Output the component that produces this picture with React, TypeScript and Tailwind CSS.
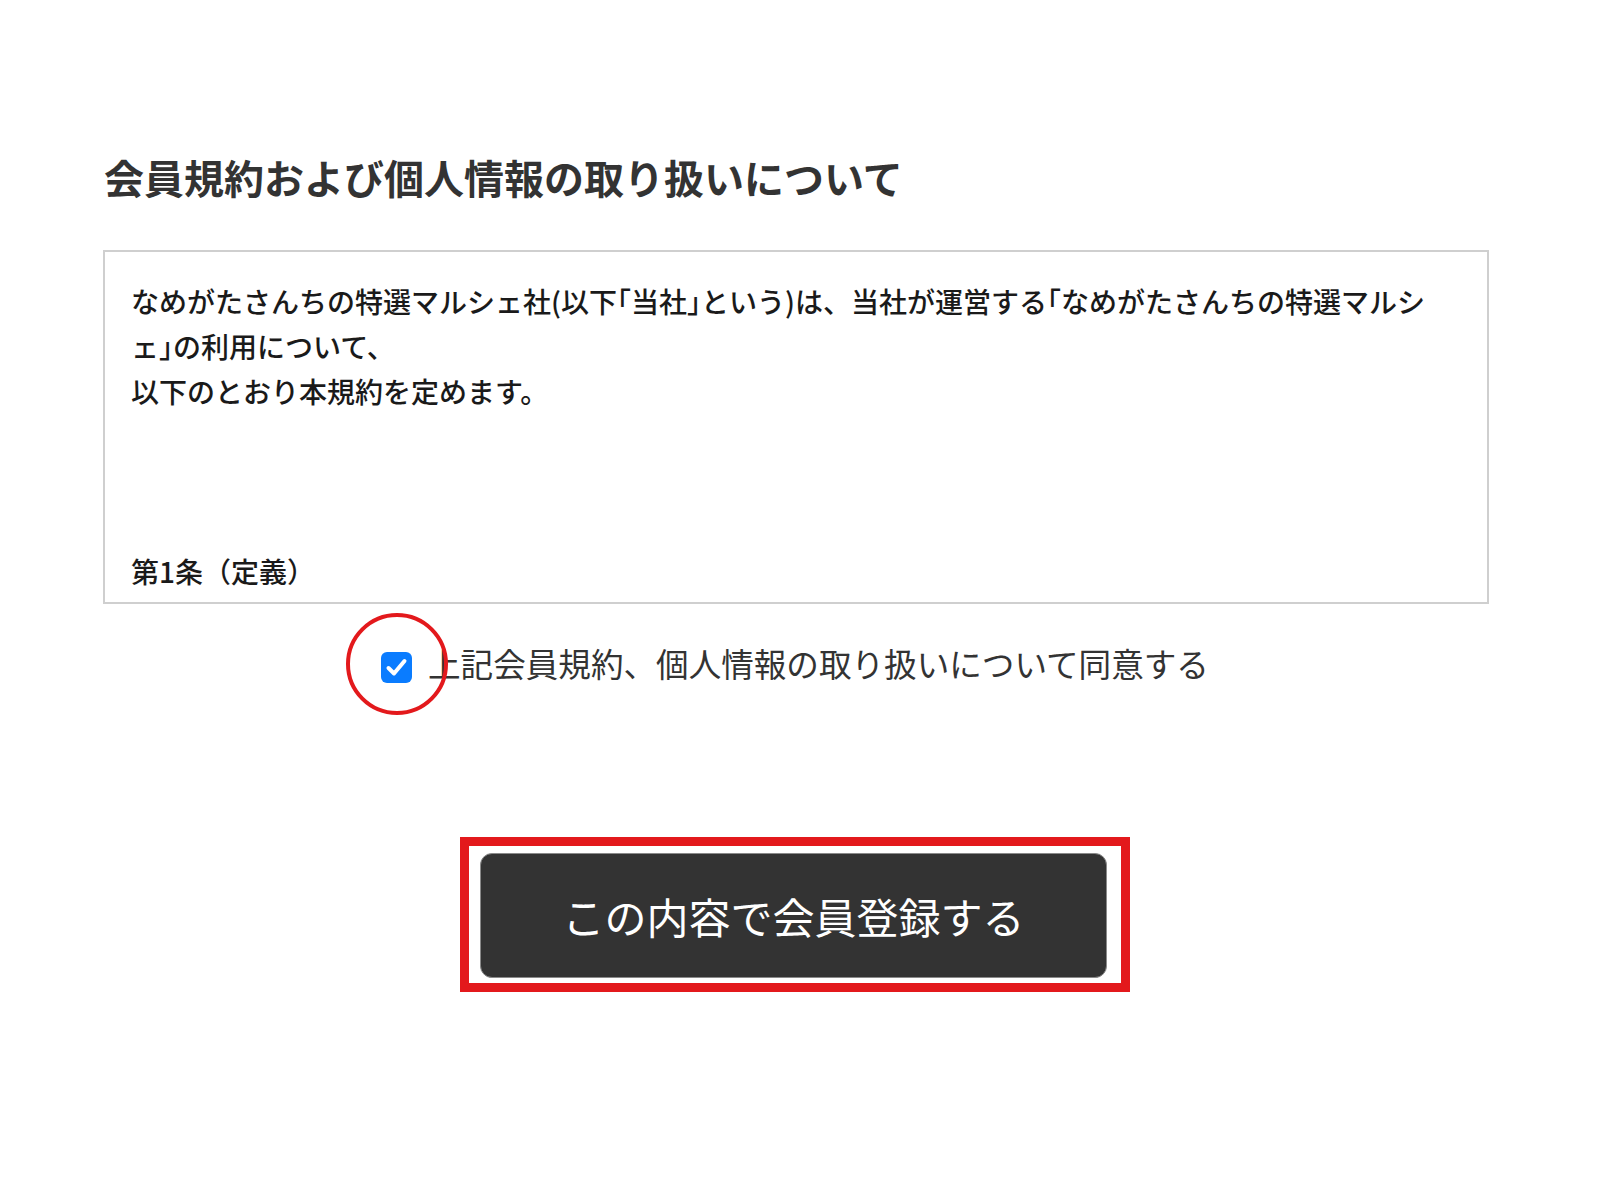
import React from "react";

const jp = "font-['Noto_Sans_CJK_JP','Noto_Sans',sans-serif]";

// 括弧だけ半角幅に詰める
const H = ({ children }: { children: React.ReactNode }) => (
  <span className="[font-feature-settings:'halt']">{children}</span>
);

const CheckBox = () => (
  <span className="relative mt-[8px] inline-flex shrink-0">
    <span className="flex h-[31px] w-[31px] items-center justify-center rounded-[6px] bg-[#0a7cff]">
      <svg width="31" height="31" viewBox="0 0 31 31" fill="none">
        <polyline
          points="7.5,16 13,21.5 23.5,9"
          stroke="#fff"
          strokeWidth="4"
          strokeLinecap="round"
          strokeLinejoin="round"
        />
      </svg>
    </span>
    {/* 注記の赤丸 */}
    <span className="pointer-events-none absolute left-1/2 top-[calc(50%-3px)] h-[102px] w-[102px] -translate-x-1/2 -translate-y-1/2 rounded-full border-[4px] border-[#e3191c]" />
  </span>
);

export default function App() {
  return (
    <div className={`${jp} h-[1200px] w-[1600px] bg-white pt-[157px]`}>
      <div className="ml-[103px] w-[1386px]">
        <h1 className="pl-[1px] text-[40px] font-bold leading-[40px] text-[#333]">
          会員規約および個人情報の取り扱いについて
        </h1>

        <div className="mt-[53px] h-[354px] overflow-hidden border-2 border-[#cfcfcf] bg-white px-[26px] pt-[27px]">
          <p className="whitespace-nowrap text-[28px] font-medium leading-[45px] text-[#1a1a1a]">
            なめがたさんちの特選マルシェ社(以下<H>「</H>当社<H>」</H>という)は、当社が運営する<H>「</H>なめがたさんちの特選マルシ
            <br />
            ェ<H>」</H>の利用について、
            <br />
            以下のとおり本規約を定めます。
            <br />
            <br />
            <br />
            <br />
            第1条（定義）
          </p>
        </div>

        <label className="mt-[39px] flex h-[40px] items-center pl-[278px]">
          <CheckBox />
          <span className="ml-[16px] text-[32.6px] leading-[40px] text-[#333]">
            上記会員規約、個人情報の取り扱いについて同意する
          </span>
        </label>
      </div>

      <div className="ml-[460px] mt-[154px] w-[670px] border-[9px] border-[#e3191c] pb-[5px] pl-[11px] pr-[14px] pt-[7px]">
        <button className="flex h-[125px] w-[627px] items-center justify-center rounded-[12px] border border-[#8a8a8a] bg-[#333] text-[42px] leading-none text-white">
          この内容で会員登録する
        </button>
      </div>
    </div>
  );
}
